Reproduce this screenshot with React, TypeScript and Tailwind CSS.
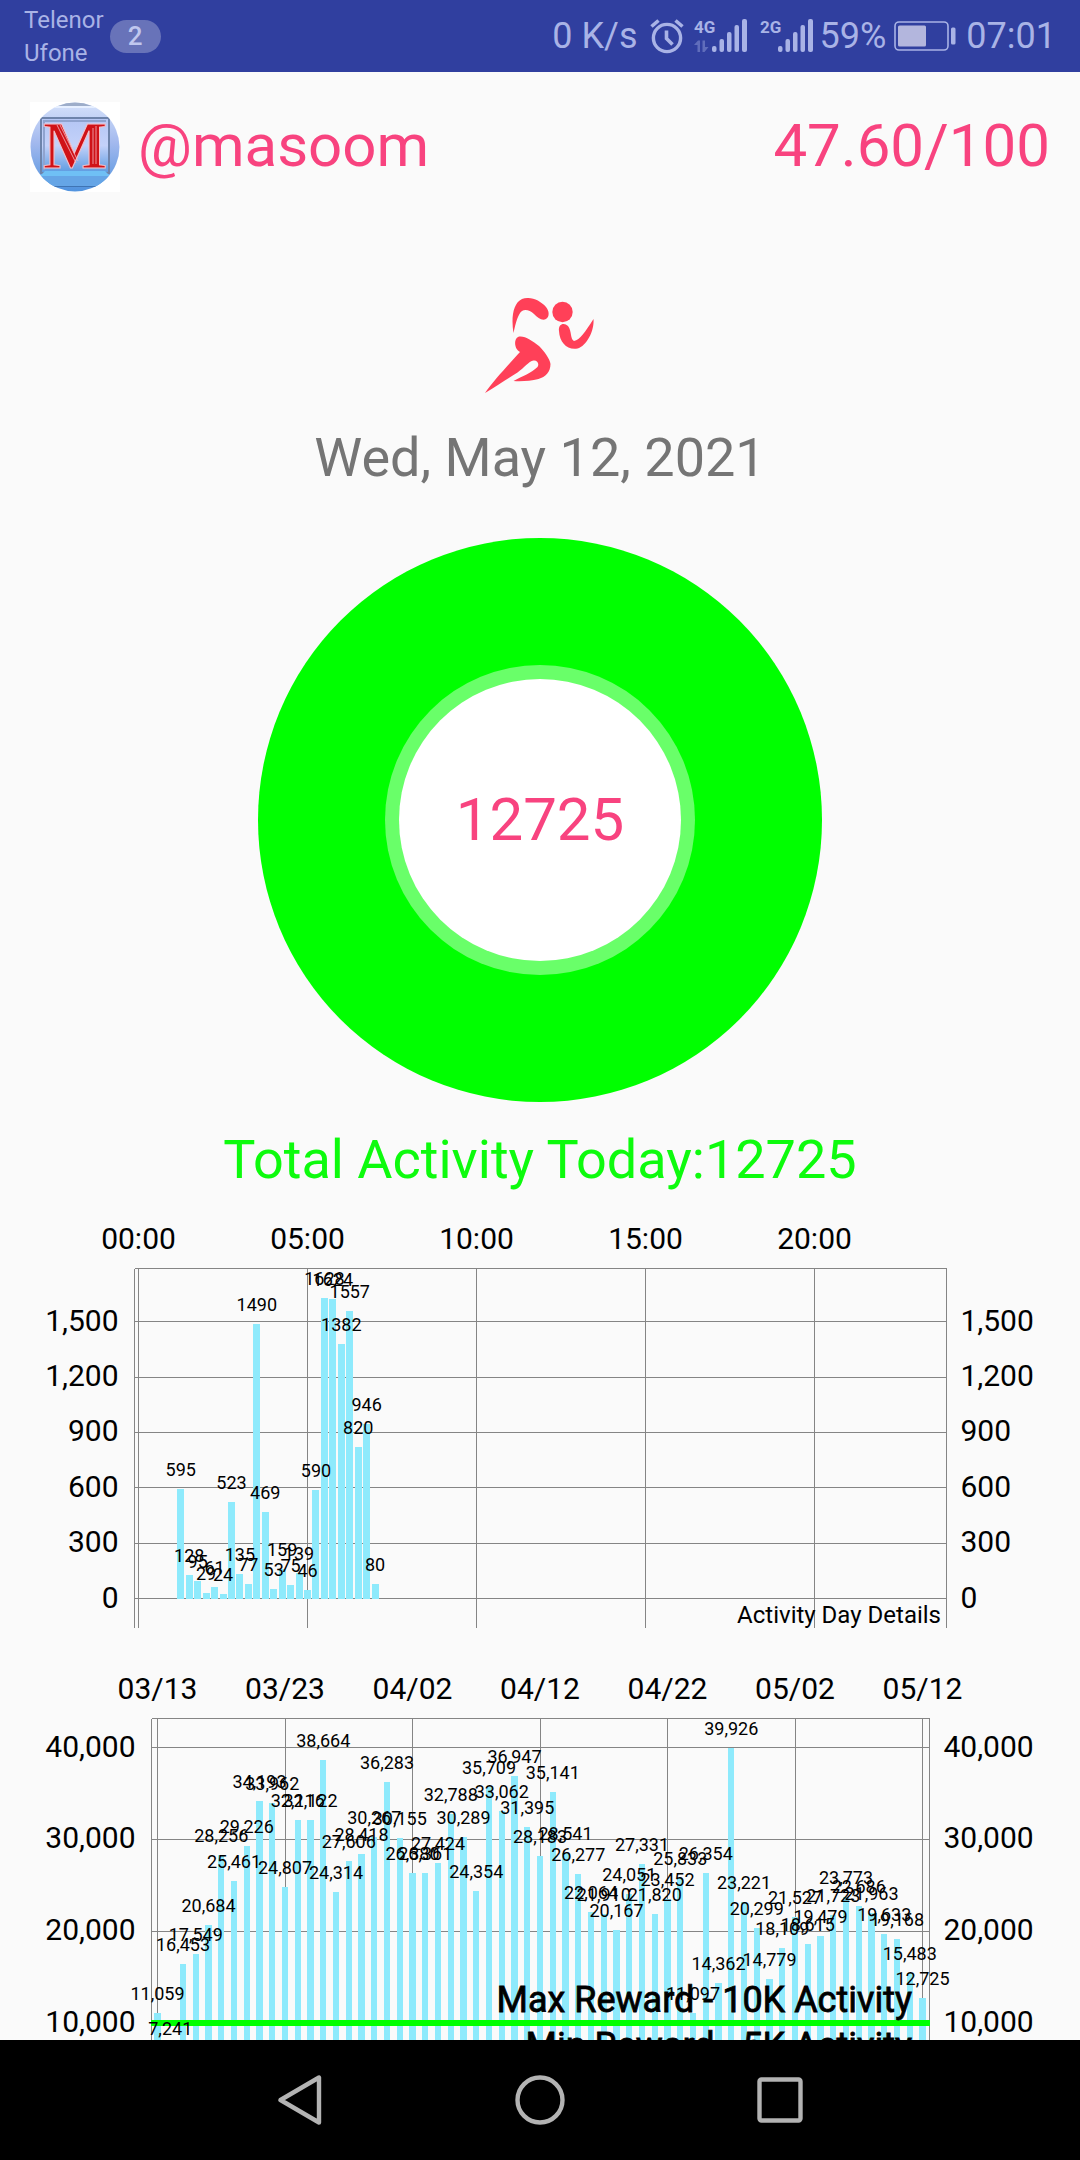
import type { ReactNode } from 'react';

type BarPoint = { slot: number; value: number };

type AxisTick = { at: number; label: string };

interface BarChartProps {
  title: string;
  points: BarPoint[];
  xTicks: AxisTick[];
  yTicks: number[];
  height: number;
  left: number;
  right: number;
  top: number;
  bottom: number;
  firstSlotX: number;
  slotWidth: number;
  barWidth: number;
  zeroY: number;
  unit: number;
  formatValue: (value: number) => string;
  children?: ReactNode;
}

const withCommas = (value: number) => value.toLocaleString('en-US');

// Steps per quarter of an hour, starting at 01:15
const DAY_VALUES = [
  595, 128, 95, 29, 61, 24, 523, 135, 77, 1490, 469, 53, 159, 75, 139, 46, 590, 1628, 1624, 1382,
  1557, 820, 946, 80,
];

// Steps per day, 03/13 to 05/12
const HISTORY_VALUES = [
  11059, 7241, 16453, 17549, 20684, 28256, 25461, 29226, 34193, 33962, 24807, 32116, 32122, 38664,
  24314, 27606, 28418, 30267, 36283, 30155, 26380, 26361, 27424, 32788, 30289, 24354, 35709, 33062,
  36947, 31395, 28183, 35141, 28541, 26277, 22064, 21910, 20167, 24051, 27331, 21820, 23452, 25833,
  11097, 26354, 14362, 39926, 23221, 20299, 14779, 18109, 21527, 18615, 19479, 21723, 23773, 22686,
  21963, 19633, 19168, 15483, 12725,
];

const dayPoints = DAY_VALUES.map((value, i) => ({ slot: i + 5, value }));
const historyPoints = HISTORY_VALUES.map((value, i) => ({ slot: i, value }));

const DAY_TICKS: AxisTick[] = [
  { at: 0, label: '00:00' },
  { at: 20, label: '05:00' },
  { at: 40, label: '10:00' },
  { at: 60, label: '15:00' },
  { at: 80, label: '20:00' },
];

const HISTORY_TICKS: AxisTick[] = [
  { at: 0, label: '03/13' },
  { at: 10, label: '03/23' },
  { at: 20, label: '04/02' },
  { at: 30, label: '04/12' },
  { at: 40, label: '04/22' },
  { at: 50, label: '05/02' },
  { at: 60, label: '05/12' },
];

function BarChart({
  title,
  points,
  xTicks,
  yTicks,
  height,
  left,
  right,
  top,
  bottom,
  firstSlotX,
  slotWidth,
  barWidth,
  zeroY,
  unit,
  formatValue,
  children,
}: BarChartProps) {
  const xOf = (slot: number) => firstSlotX + slot * slotWidth;
  const yOf = (value: number) => zeroY - value * unit;

  return (
    <svg viewBox={`0 0 1080 ${height}`} className="block w-full shrink-0" role="img" aria-label={title}>
      {/* Grid */}
      <g stroke="#858585" strokeWidth={1} shapeRendering="crispEdges">
        <line x1={left} x2={right} y1={top} y2={top} />
        <line x1={left} x2={left} y1={top} y2={bottom} />
        <line x1={right} x2={right} y1={top} y2={bottom} />
        {yTicks.map((value) => (
          <line key={value} x1={left} x2={right} y1={yOf(value)} y2={yOf(value)} />
        ))}
        {xTicks.map((tick) => (
          <line key={tick.label} x1={xOf(tick.at)} x2={xOf(tick.at)} y1={top} y2={bottom} />
        ))}
      </g>

      {/* Bars */}
      <g fill="#8eeafc" shapeRendering="crispEdges">
        {points.map(({ slot, value }) => (
          <rect
            key={slot}
            x={xOf(slot) - barWidth / 2}
            y={yOf(value)}
            width={barWidth}
            height={value * unit}
          />
        ))}
      </g>

      {children}

      {/* Bar values */}
      <g fontSize={18} textAnchor="middle">
        {points.map(({ slot, value }) => (
          <text key={slot} x={xOf(slot)} y={yOf(value) - 13}>
            {formatValue(value)}
          </text>
        ))}
      </g>

      {/* Axis labels */}
      <g fontSize={30}>
        {xTicks.map((tick) => (
          <text key={tick.label} x={xOf(tick.at)} y={top - 20} textAnchor="middle">
            {tick.label}
          </text>
        ))}
        {yTicks.map((value) => (
          <text key={`l${value}`} x={left - 16} y={yOf(value) + 9} textAnchor="end">
            {withCommas(value)}
          </text>
        ))}
        {yTicks.map((value) => (
          <text key={`r${value}`} x={right + 14} y={yOf(value) + 9}>
            {withCommas(value)}
          </text>
        ))}
      </g>
    </svg>
  );
}

function AlarmIcon() {
  return (
    <svg width="34" height="36" viewBox="0 0 34 36" fill="none" stroke="currentColor" aria-hidden="true">
      <circle cx="17" cy="20" r="13.6" strokeWidth="3.4" />
      <path d="M16.5 12.5v8l6 6" strokeWidth="3.6" />
      <path d="M1.5 8.500 8.500 2.500M32.500 8.500 25.500 2.500" strokeWidth="3.6" />
    </svg>
  );
}

function SignalIcon({ network, busy }: { network: string; busy?: boolean }) {
  return (
    <svg width="54" height="36" viewBox="0 0 54 36" fill="currentColor" role="img" aria-label={network}>
      <text x="0" y="15" fontSize="17" fontWeight="700">
        {network}
      </text>
      {busy && (
        <path d="M0 27l4-4.500h2V34H3.500v-7zM8.500 22.500H11V29h3.500l-4 5h-2z" opacity="0.4" />
      )}
      <rect x="18" y="28" width="4.500" height="6" rx="2" />
      <rect x="25.500" y="21" width="4.500" height="13" rx="2" />
      <rect x="33" y="14" width="4.500" height="20" rx="2" />
      <rect x="40.500" y="7" width="4.500" height="27" rx="2" />
      <rect x="48" y="1" width="5" height="33" rx="2" />
    </svg>
  );
}

function BatteryIcon() {
  return (
    <svg width="62" height="30" viewBox="0 0 62 30" fill="none" role="img" aria-label="Battery">
      <rect x="1" y="1" width="53" height="28" rx="4" stroke="currentColor" strokeWidth="1.6" />
      <rect x="4" y="4.500" width="28" height="21" rx="1.500" fill="#b3b6dd" />
      <rect x="57" y="6.500" width="4.500" height="17" rx="1.500" fill="currentColor" />
    </svg>
  );
}

function StatusBar() {
  return (
    <div className="flex h-[72px] shrink-0 items-center bg-[#303f9f] px-[24px] text-[#a9b3e6]">
      <div className="pt-[2px] text-[24px] leading-[33px]">
        <p>Telenor</p>
        <p>Ufone</p>
      </div>
      <span className="ml-[6px] flex h-[33px] w-[51px] items-center justify-center rounded-full bg-[#6873b9] text-[26px] font-medium text-[#c0c7ee]">
        2
      </span>
      <div className="ml-auto flex items-center text-[36px] leading-[42px]">
        <span className="mr-[12px]">0 K/s</span>
        <AlarmIcon />
        <div className="ml-[10px] flex gap-[12px]">
          <SignalIcon network="4G" busy />
          <SignalIcon network="2G" />
        </div>
        <span className="ml-[6px]">59%</span>
        <span className="mr-[10px] ml-[8px]">
          <BatteryIcon />
        </span>
        <span>07:01</span>
      </div>
    </div>
  );
}

function Avatar() {
  return (
    <svg width="90" height="90" viewBox="0 0 90 90" className="shrink-0" role="img" aria-label="Profile">
      <defs>
        <linearGradient id="sky" x1="0" y1="0" x2="0" y2="1">
          <stop offset="0" stopColor="#d6e2fb" />
          <stop offset="0.45" stopColor="#a3b9ee" />
          <stop offset="1" stopColor="#4f92de" />
        </linearGradient>
        <linearGradient id="panel" x1="0" y1="0" x2="0" y2="1">
          <stop offset="0" stopColor="#b4c6f4" />
          <stop offset="0.5" stopColor="#c3d1f9" />
          <stop offset="1" stopColor="#5b9ae0" />
        </linearGradient>
        <clipPath id="disc">
          <circle cx="45" cy="45" r="44.500" />
        </clipPath>
      </defs>
      <rect width="90" height="90" fill="#fff" />
      <g clipPath="url(#disc)">
        <rect width="90" height="90" fill="url(#sky)" />
        <rect width="90" height="4" fill="#9dadc9" />
        <rect y="4" width="90" height="2" fill="#e6efff" />
        <rect x="11" y="16" width="68" height="55" fill="url(#panel)" stroke="#6d83ab" strokeWidth="2" />
        <path d="M14 68V19h62" fill="none" stroke="#8fa3cf" strokeWidth="2" />
        <path d="M15 69h60l5 5H10z" fill="#6fc0f5" />
        <rect x="0" y="74" width="90" height="10" fill="#65a5e6" />
        <rect x="0" y="84" width="90" height="1" fill="#3f74b4" />
      </g>
      <text
        x="45"
        y="66"
        textAnchor="middle"
        fontSize="68"
        fontWeight="700"
        fontFamily="Liberation Serif, serif"
        fill="#d01217"
        stroke="#f3c3cb"
        strokeWidth="1"
      >
        M
      </text>
      <path d="M27 23l19 38M30 23l18 36M66 24v38M63 26v36" stroke="#f2b8c0" strokeWidth="0.8" />
    </svg>
  );
}

function RunnerIcon() {
  return (
    <svg width="110" height="96" viewBox="0 0 110 96" fill="#ff4058" role="img" aria-label="Running">
      <circle cx="77.500" cy="14" r="10.200" />
      <path d="M28.500 35C26 20 28 5 37 1c8-3 18 1 24 8 4 5 3 10 0 12-4 2-8-1-12-5-4-4-9-5-12-3-4 3-6 11-8.500 22z" />
      <path d="M74 33c-1-7 5-9 9-5 4 5 2 13 6 15 6-1 11-9 19.500-22 1 12-7 27-16 29.500-10 2-18-6-18.500-17.500z" />
      <path d="M33 39c6-2 14 4 21 9 5 5 11 13 11.500 18 0 8-5 13-12 15-8 2-17 2.500-25 2 9-5 18-8 24-14 2-3 0-7-4-6.500-5 1-9 7-16 12C22 81 12 88 0 95c8-12 26-31 35-41-5-2-7-12-2-15z" />
    </svg>
  );
}

function NavigationBar() {
  return (
    <nav className="flex h-[120px] shrink-0 items-center justify-center bg-black text-[#b3b3b3]">
      <button aria-label="Back" className="flex h-full w-[240px] items-center justify-center">
        <svg width="44" height="50" viewBox="0 0 44 50" fill="none" stroke="currentColor" strokeWidth="4.400" strokeLinejoin="round">
          <path d="M2.500 25 41 2.500v45z" />
        </svg>
      </button>
      <button aria-label="Home" className="flex h-full w-[240px] items-center justify-center">
        <svg width="50" height="50" viewBox="0 0 50 50" fill="none" stroke="currentColor" strokeWidth="4.400">
          <circle cx="25" cy="25" r="22.500" />
        </svg>
      </button>
      <button aria-label="Recent apps" className="flex h-full w-[240px] items-center justify-center">
        <svg width="46" height="46" viewBox="0 0 46 46" fill="none" stroke="currentColor" strokeWidth="4.400">
          <rect x="2.500" y="2.500" width="41" height="41" rx="2" />
        </svg>
      </button>
    </nav>
  );
}

export default function App() {
  return (
    <div className="flex h-screen flex-col bg-[#fafafa] font-['Roboto',sans-serif] text-black">
      <StatusBar />

      <main className="flex min-h-0 flex-1 flex-col items-center overflow-hidden">
        {/* Account */}
        <header className="flex w-full shrink-0 items-start px-[30px] pt-[30px] text-[60px] leading-[88px] text-[#f8437f]">
          <Avatar />
          <h1 className="ml-[18px]">@masoom</h1>
          <span className="ml-auto">47.60/100</span>
        </header>

        <div className="mt-[106px] shrink-0">
          <RunnerIcon />
        </div>
        <p className="mt-[28px] text-[54px] leading-[72px] text-[#757575]">Wed, May 12, 2021</p>

        {/* Today's total */}
        <div className="mt-[44px] flex size-[564px] shrink-0 items-center justify-center rounded-full bg-[#00ff00]">
          <div className="flex size-[310px] items-center justify-center rounded-full bg-[#69ff69]">
            <div className="flex size-[282px] items-center justify-center rounded-full bg-white text-[60px] text-[#f8437f]">
              12725
            </div>
          </div>
        </div>
        <p className="mt-[22px] text-[54px] leading-[72px] text-[#0dfb0d]">
          Total Activity Today:12725
        </p>

        <BarChart
          title="Activity Day Details"
          points={dayPoints}
          xTicks={DAY_TICKS}
          yTicks={[0, 300, 600, 900, 1200, 1500]}
          height={444}
          left={134.5}
          right={946.5}
          top={72.5}
          bottom={432}
          firstSlotX={138.5}
          slotWidth={8.45}
          barWidth={7}
          zeroY={402.5}
          unit={0.1845}
          formatValue={String}
        >
          <text x={941} y={427} fontSize={24} textAnchor="end">
            Activity Day Details
          </text>
        </BarChart>

        <BarChart
          title="Activity History"
          points={historyPoints}
          xTicks={HISTORY_TICKS}
          yTicks={[10000, 20000, 30000, 40000]}
          height={500}
          left={151.5}
          right={929.5}
          top={78.5}
          bottom={474}
          firstSlotX={157.5}
          slotWidth={12.75}
          barWidth={6.4}
          zeroY={474.5}
          unit={0.00917}
          formatValue={withCommas}
        >
          {/* Reward limits */}
          <line x1={151} x2={930} y1={383} y2={383} stroke="#00ff00" strokeWidth={6} />
          <line x1={151} x2={930} y1={429} y2={429} stroke="#00ff00" strokeWidth={6} />
          <g fontSize={36} textAnchor="end" stroke="#000" strokeWidth={0.8}>
            <text x={912} y={372}>
              Max Reward - 10K Activity
            </text>
            <text x={912} y={418}>
              Min Reward - 5K Activity
            </text>
          </g>
        </BarChart>
      </main>

      <NavigationBar />
    </div>
  );
}
